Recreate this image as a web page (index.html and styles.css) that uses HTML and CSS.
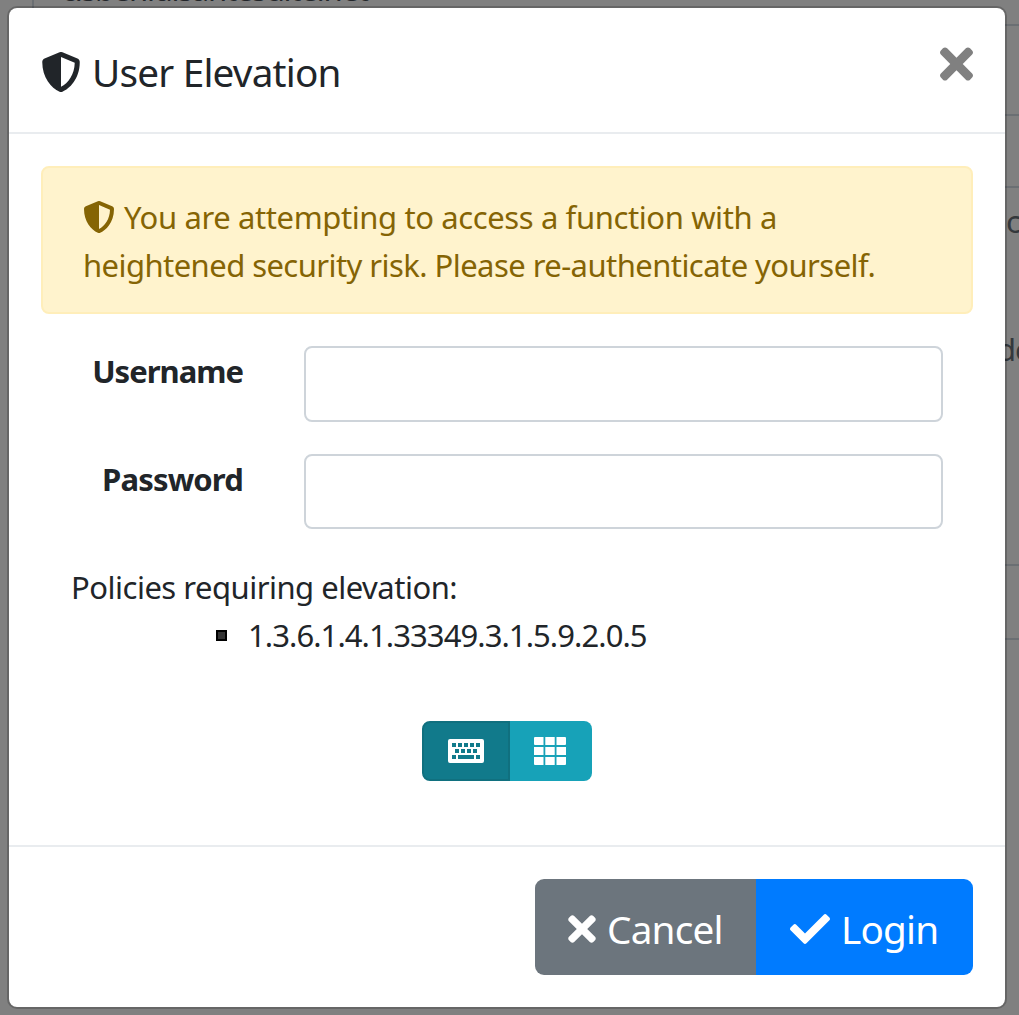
FILE: index.html
```html
<!DOCTYPE html>
<html lang="en">
<head>
<meta charset="utf-8">
<title>User Elevation</title>
<link rel="stylesheet" href="styles.css">
</head>
<body>
<svg class="defs" aria-hidden="true">
  <symbol id="shield" viewBox="0 0 512 512"><path d="M466.5 83.7l-192-80a48.15 48.15 0 0 0-36.9 0l-192 80C27.7 91.1 16 108.6 16 128c0 198.5 114.5 335.7 221.5 380.3 11.8 4.9 25.1 4.9 36.9 0C360.1 472.6 496 349.3 496 128c0-19.4-11.7-36.9-29.5-44.3zM256.1 446.3l-.1-381 175.9 73.3c-3.3 151.4-82.1 261.1-175.8 307.7z"/></symbol>
  <symbol id="times" viewBox="0 0 352 512"><path d="M242.72 256l100.07-100.07c12.28-12.28 12.28-32.19 0-44.48l-22.24-22.24c-12.28-12.28-32.19-12.28-44.48 0L176 189.28 75.93 89.21c-12.28-12.28-32.19-12.28-44.48 0L9.21 111.45c-12.28 12.28-12.28 32.19 0 44.48L109.28 256 9.21 356.07c-12.28 12.28-12.28 32.19 0 44.48l22.24 22.24c12.28 12.28 32.2 12.28 44.48 0L176 322.72l100.07 100.07c12.28 12.28 32.2 12.28 44.48 0l22.24-22.24c12.28-12.28 12.28-32.19 0-44.48L242.72 256z"/></symbol>
  <symbol id="check" viewBox="0 0 512 512"><path d="M173.898 439.404l-166.4-166.4c-9.997-9.997-9.997-26.206 0-36.204l36.203-36.204c9.997-9.998 26.207-9.998 36.204 0L192 312.69 432.095 72.596c9.997-9.997 26.207-9.997 36.204 0l36.203 36.204c9.997 9.997 9.997 26.206 0 36.204l-294.4 294.401c-9.998 9.997-26.207 9.997-36.204-.001z"/></symbol>
</svg>
<div class="page" aria-hidden="true">
  <span class="rule-v"></span>
  <span class="peek peek-host">cisbenidlsantesuite.net</span>
  <span class="rule r1"></span><span class="rule r2"></span><span class="rule r3"></span><span class="rule r4"></span><span class="rule r5"></span>
  <span class="peek peek-a">c</span>
  <span class="peek peek-b">de</span>
</div>
<div class="modal" role="dialog">
  <header class="modal-header">
    <h1 class="title"><svg class="i40"><use href="#shield"/></svg><span class="title-text">User Elevation</span></h1>
    <button class="close" aria-label="Close"><svg><use href="#times"/></svg></button>
  </header>
  <main class="modal-body">
    <div class="alert">
      <div class="line l1"><svg class="i32"><use href="#shield"/></svg><span>You are attempting to access a function with a</span></div>
      <div class="line l2"><span>heightened security risk. Please re-authenticate yourself.</span></div>
    </div>
    <div class="field"><label for="u">Username</label><input id="u" type="text"></div>
    <div class="field second"><label for="p">Password</label><input id="p" type="password"></div>
    <div class="policies">
      <div class="pol">Policies requiring elevation:</div>
      <ul><li><i class="bullet"></i><span class="oid">1.3.6.1.4.1.33349.3.1.5.9.2.0.5</span></li></ul>
    </div>
    <div class="modes">
      <button class="mode active" aria-label="Keyboard"><svg width="36" height="24" viewBox="0 0 36 24"><path fill-rule="evenodd" d="M2 0h32a2 2 0 0 1 2 2v20a2 2 0 0 1-2 2H2a2 2 0 0 1-2-2V2a2 2 0 0 1 2-2zM4 4v4h4V4zM10 4v4h4V4zM16 4v4h4V4zM22 4v4h4V4zM28 4v4h4V4zM7 10v4h4v-4zM13 10v4h4v-4zM19 10v4h4v-4zM25 10v4h4v-4zM4 16v4h4v-4zM10 16v4h16v-4zM28 16v4h4v-4z"/></svg></button>
      <button class="mode" aria-label="Keypad"><svg width="32" height="28" viewBox="0 0 32 28"><path d="M1 0h8.5v8H1a1 1 0 0 1-1-1V1a1 1 0 0 1 1-1zM11.3 0h9.4v8h-9.4zM22.5 0H31a1 1 0 0 1 1 1v6a1 1 0 0 1-1 1h-8.5zM0 10h9.5v8H0zM11.3 10h9.4v8h-9.4zM22.5 10H32v8h-9.5zM0 20h9.5v8H1a1 1 0 0 1-1-1zM11.3 20h9.4v8h-9.4zM22.5 20H32v7a1 1 0 0 1-1 1h-8.5z"/></svg></button>
    </div>
  </main>
  <footer class="modal-footer">
    <button class="btn cancel"><svg><use href="#times"/></svg><span>Cancel</span></button>
    <button class="btn login"><svg><use href="#check"/></svg><span>Login</span></button>
  </footer>
</div>
</body>
</html>
```

FILE: styles.css
```css
* { box-sizing: border-box; }
body { margin: 0; width: 1019px; height: 1015px; overflow: hidden; background: #808080; color: #212529; font: 31px/48px "Noto Sans", "Open Sans", sans-serif; padding: 6px 12px 6px 7px; position: relative; }
button { font: inherit; border: 0; padding: 0; }
svg { display: block; fill: currentColor; flex: none; }
.defs { position: absolute; width: 0; height: 0; }
span { white-space: nowrap; }

/* page behind the dialog */
.page { position: absolute; inset: 0; overflow: hidden; }
.rule { position: absolute; left: 1000px; right: 0; height: 2px; background: #6b6f73; }
.rule-v { position: absolute; left: 32px; top: 0; width: 2px; height: 8px; background: #6b6f73; }
.r1 { top: 24px; }
.r2 { top: 114px; }
.r3 { top: 186px; }
.r4 { top: 564px; }
.r5 { top: 638px; }
.peek { position: absolute; color: #23262a; }
.peek-host { left: 61px; top: -35px; letter-spacing: -1.25px; }
.peek-a { left: 1006px; top: 197px; color: #34383c; }
.peek-b { left: 997px; top: 325px; color: #34383c; letter-spacing: -1px; }

.modal { position: relative; width: 1000px; height: 1003px; border: 2px solid rgba(0,0,0,.2); background: #fff; background-clip: padding-box; border-radius: 10px; display: flex; flex-direction: column; }
.modal-header { height: 126px; border-bottom: 2px solid #e9ecef; padding: 32px; display: flex; justify-content: space-between; }
.title { margin: 0; display: flex; align-items: center; height: 64px; font-size: 38.7px; font-weight: 400; line-height: 60px; letter-spacing: -.8px; }
.i40 { width: 40px; height: 40px; }
.title-text { margin-left: 11px; }
.close { background: none; color: #808080; height: 48px; }
.close svg { width: 33px; height: 48px; }

.modal-body { flex: 1; padding: 32px; }
.alert { height: 148px; background: #fff3cd; border: 2px solid #ffeeba; border-radius: 8px; color: #856404; padding: 25px 40px; }
.line { height: 48px; display: flex; align-items: center; }
.l1 { letter-spacing: -.39px; }
.l2 { letter-spacing: -.56px; }
.i32 { width: 32px; height: 32px; margin-right: 9px; }
.field { display: flex; margin-top: 32px; height: 76px; padding-right: 30px; }
.field.second { height: 75px; }
.field label { width: 202px; margin-right: 61px; text-align: right; font-weight: 700; padding-top: 1px; letter-spacing: -1px; }
.field.second label { letter-spacing: -.85px; }
.field input { flex: 1; min-width: 0; border: 2px solid #ced4da; border-radius: 8px; background: #fff; padding: 0 24px; font: inherit; }
.policies { margin-top: 34px; padding-left: 30px; }
.pol { letter-spacing: -.5px; }
.oid { letter-spacing: -.92px; }
.policies ul { margin: 0; padding: 0 0 0 145px; list-style: none; }
.policies li { display: flex; align-items: center; }
.bullet { width: 11px; height: 11px; border: 2px solid #000; background: #333; margin-right: 21px; }
.modes { display: flex; width: 170px; margin: 62px auto 0 381px; }
.mode { width: 82px; height: 60px; background: #17a2b8; color: #fff; display: flex; align-items: center; justify-content: center; border-radius: 0 8px 8px 0; padding-right: 2px; }
.mode.active { width: 88px; background: #117a8b; border: 2px solid #10707f; border-radius: 8px 0 0 8px; padding: 0; }

.modal-footer { height: 162px; border-top: 2px solid #e9ecef; padding: 32px; display: flex; justify-content: flex-end; }
.btn { height: 96px; color: #fff; font-size: 38.7px; display: flex; align-items: center; padding-left: 33px; letter-spacing: -.8px; }
.btn svg { height: 40px; width: 40px; }
.btn span { padding-top: 3px; }
.cancel { width: 221px; background: #6c757d; border-radius: 9px 0 0 9px; }
.cancel svg { width: 28px; margin: 4px 11px 0 0; }
.login { width: 217px; background: #007bff; border-radius: 0 9px 9px 0; }
.login svg { margin: 4px 11px 0 1px; }
```
